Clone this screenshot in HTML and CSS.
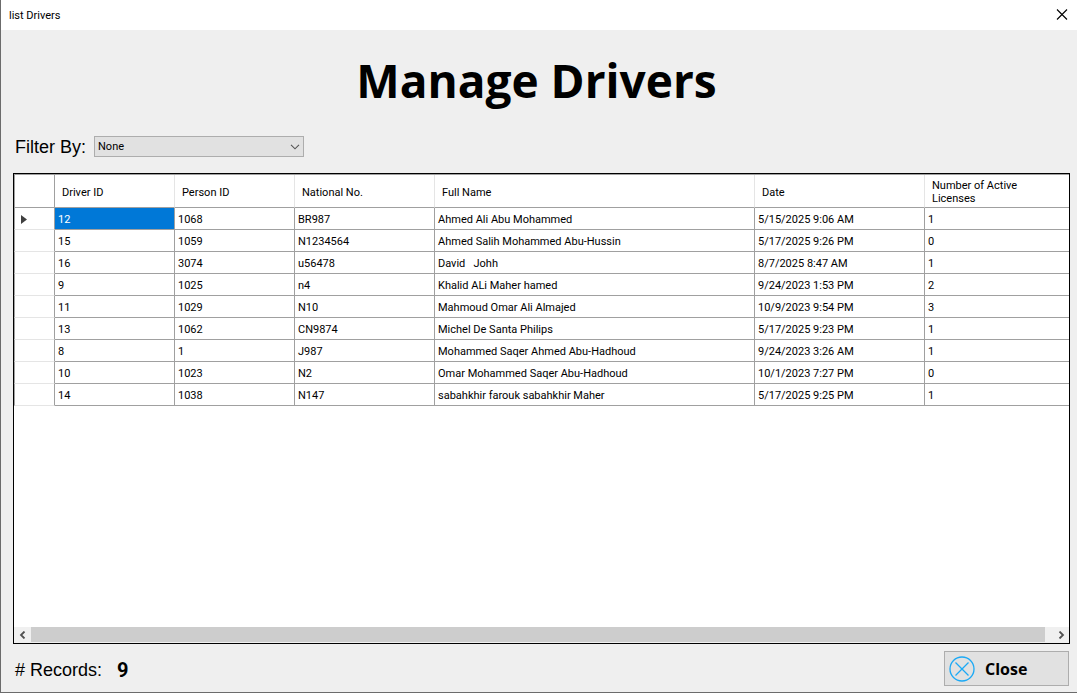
FILE: index.html
```
<!DOCTYPE html>
<html lang="en">
<head>
<meta charset="utf-8">
<title>list Drivers</title>
<link rel="stylesheet" href="styles.css">
</head>
<body>
<div class="window">
  <header class="titlebar">
    <span class="titlebar-text">list Drivers</span>
    <button class="titlebar-close" type="button" aria-label="Close window">
      <svg width="12" height="12" viewBox="0 0 12 12"><path d="M1 .5l10 10M11 .5l-10 10" stroke="#000" stroke-width="1.1" fill="none"/></svg>
    </button>
  </header>
  <main class="content">
    <h1 class="heading">Manage Drivers</h1>
    <div class="filter">
      <label class="filter-label" for="filter">Filter By:</label>
      <div class="combo">
        <select class="combo-select" id="filter"><option>None</option></select>
        <svg class="combo-arrow" width="10" height="6" viewBox="0 0 10 6"><path d="M1 .8l4 4 4-4" stroke="#555" stroke-width="1.1" fill="none"/></svg>
      </div>
    </div>
    <section class="grid">
      <div class="grid-body">
        <table class="table">
          <colgroup><col class="c-mark"><col class="c-id"><col class="c-id"><col class="c-nat"><col class="c-name"><col class="c-date"><col></colgroup>
          <thead>
            <tr><td class="mark"></td><th>Driver ID</th><th>Person ID</th><th>National No.</th><th>Full Name</th><th>Date</th><th><div class="wrap">Number of Active Licenses</div></th></tr>
          </thead>
          <tbody>
            <tr><td class="mark"><svg class="mark-icon" width="6" height="9" viewBox="0 0 6 9"><path d="M0 0v9l6-4.500z" fill="#404040"/></svg></td><td class="selected">12</td><td>1068</td><td>BR987</td><td>Ahmed Ali Abu Mohammed</td><td>5/15/2025 9:06 AM</td><td>1</td></tr>
            <tr><td class="mark"></td><td>15</td><td>1059</td><td>N1234564</td><td>Ahmed Salih Mohammed Abu-Hussin</td><td>5/17/2025 9:26 PM</td><td>0</td></tr>
            <tr><td class="mark"></td><td>16</td><td>3074</td><td>u56478</td><td>David &nbsp; Johh</td><td>8/7/2025 8:47 AM</td><td>1</td></tr>
            <tr><td class="mark"></td><td>9</td><td>1025</td><td>n4</td><td>Khalid ALi Maher hamed</td><td>9/24/2023 1:53 PM</td><td>2</td></tr>
            <tr><td class="mark"></td><td>11</td><td>1029</td><td>N10</td><td>Mahmoud Omar Ali Almajed</td><td>10/9/2023 9:54 PM</td><td>3</td></tr>
            <tr><td class="mark"></td><td>13</td><td>1062</td><td>CN9874</td><td>Michel De Santa Philips</td><td>5/17/2025 9:23 PM</td><td>1</td></tr>
            <tr><td class="mark"></td><td>8</td><td>1</td><td>J987</td><td>Mohammed Saqer Ahmed Abu-Hadhoud</td><td>9/24/2023 3:26 AM</td><td>1</td></tr>
            <tr><td class="mark"></td><td>10</td><td>1023</td><td>N2</td><td>Omar Mohammed Saqer Abu-Hadhoud</td><td>10/1/2023 7:27 PM</td><td>0</td></tr>
            <tr><td class="mark"></td><td>14</td><td>1038</td><td>N147</td><td>sabahkhir farouk sabahkhir Maher</td><td>5/17/2025 9:25 PM</td><td>1</td></tr>
          </tbody>
        </table>
      </div>
      <div class="scrollbar">
        <button class="scroll-btn" type="button" aria-label="Scroll left"><svg width="7" height="8" viewBox="0 0 7 8"><path d="M5.500 .5L2 4l3.500 3.500" stroke="#505050" stroke-width="1.800" fill="none"/></svg></button>
        <div class="scroll-thumb"></div>
        <button class="scroll-btn scroll-btn-right" type="button" aria-label="Scroll right"><svg width="7" height="8" viewBox="0 0 7 8"><path d="M1.500 .5L5 4 1.500 7.500" stroke="#505050" stroke-width="1.800" fill="none"/></svg></button>
      </div>
    </section>
    <footer class="footer">
      <span class="records"># Records:</span>
      <span class="count">9</span>
      <button class="close" type="button">
        <svg width="26" height="26" viewBox="0 0 26 26" fill="none" stroke="#1ba9f5" stroke-width="1.300"><circle cx="13" cy="13" r="12"/><path d="M6.500 6.500l13 13M19.500 6.500l-13 13"/></svg>
        Close
      </button>
    </footer>
  </main>
</div>
</body>
</html>
```
FILE: styles.css
```
* { box-sizing: border-box; }
body {
  margin: 0;
  background: #efefef;
  color: #000;
  font-family: Roboto, "Liberation Sans", sans-serif;
  font-size: 11px;
}
button { padding: 0; border: 0; background: none; font: inherit; color: inherit; }
svg { display: block; }
.window {
  display: flex;
  flex-direction: column;
  min-height: 100vh;
  border-left: 1px solid #6b6b6b;
  border-bottom: 1px solid #6b6b6b;
}
.titlebar {
  display: flex;
  align-items: center;
  justify-content: space-between;
  height: 30px;
  padding: 0 9px 0 8px;
  background: #fff;
}
.content {
  flex: 1;
  display: flex;
  flex-direction: column;
  padding: 0 7px 6px 12px;
}
.heading {
  margin: 18px 0 0;
  padding-right: 10px;
  font: bold 46px/64px "Open Sans", "Noto Sans", sans-serif;
  text-align: center;
}
.filter {
  display: flex;
  align-items: center;
  gap: 8px;
  margin: 24px 0 16px;
  padding-left: 2px;
}
.filter-label, .records { font: 18px/20px "Liberation Sans", Arial, sans-serif; }
.combo { position: relative; }
.combo-select {
  display: block;
  appearance: none;
  width: 210px;
  height: 21px;
  padding: 0 3px;
  border: 1px solid #adadad;
  border-radius: 0;
  background: #e1e1e1;
  color: #000;
  font: inherit;
}
.combo-arrow { position: absolute; right: 4px; top: 8px; pointer-events: none; }
.grid {
  flex: 1;
  display: flex;
  flex-direction: column;
  border: 1px solid #000;
  background: #fff;
}
.grid-body { flex: 1; overflow: hidden; border-top: 1px solid #a0a0a0; }
.table {
  width: 100%;
  table-layout: fixed;
  border-collapse: separate;
  border-spacing: 0;
  line-height: 13px;
}
.c-mark { width: 41px; }
.c-id { width: 120px; }
.c-nat { width: 140px; }
.c-name { width: 320px; }
.c-date { width: 170px; }
th, td {
  height: 22px;
  padding: 2px 3px 0;
  border-right: 1px solid #a0a0a0;
  border-bottom: 1px solid #a0a0a0;
  text-align: left;
  font-weight: 400;
  white-space: nowrap;
}
th { height: 33px; padding: 2px 7px 0; border-right-color: #e5e5e5; white-space: normal; }
th:last-child, td:last-child { border-right: 0; }
.wrap { max-width: 110px; }
.mark { padding: 2px 6px 0; border-left: 1px solid #a0a0a0; border-bottom-color: #e5e5e5; }
thead .mark { border-bottom-color: #a0a0a0; }
.selected { background: #0078d7; color: #fff; }
.scrollbar {
  display: flex;
  height: 16px;
  padding-bottom: 1px;
  background: #f0f0f0;
}
.scroll-btn { display: flex; align-items: center; justify-content: center; width: 17px; }
.scroll-btn-right { width: 24px; padding-left: 8px; }
.scroll-thumb { flex: 1; background: #cdcdcd; }
.footer { display: flex; align-items: center; margin-top: 7px; padding: 0 1px 0 2px; }
.records, .count { padding-top: 2px; }
.count { margin-left: 15px; font-size: 20px; font-weight: 700; line-height: 24px; }
.close {
  display: flex;
  align-items: center;
  gap: 10px;
  width: 125px;
  height: 35px;
  margin-left: auto;
  padding: 0 4px;
  border: 1px solid #adadad;
  background: #e1e1e1;
  font: bold 16px/20px "Open Sans", "Noto Sans", sans-serif;
}
```
